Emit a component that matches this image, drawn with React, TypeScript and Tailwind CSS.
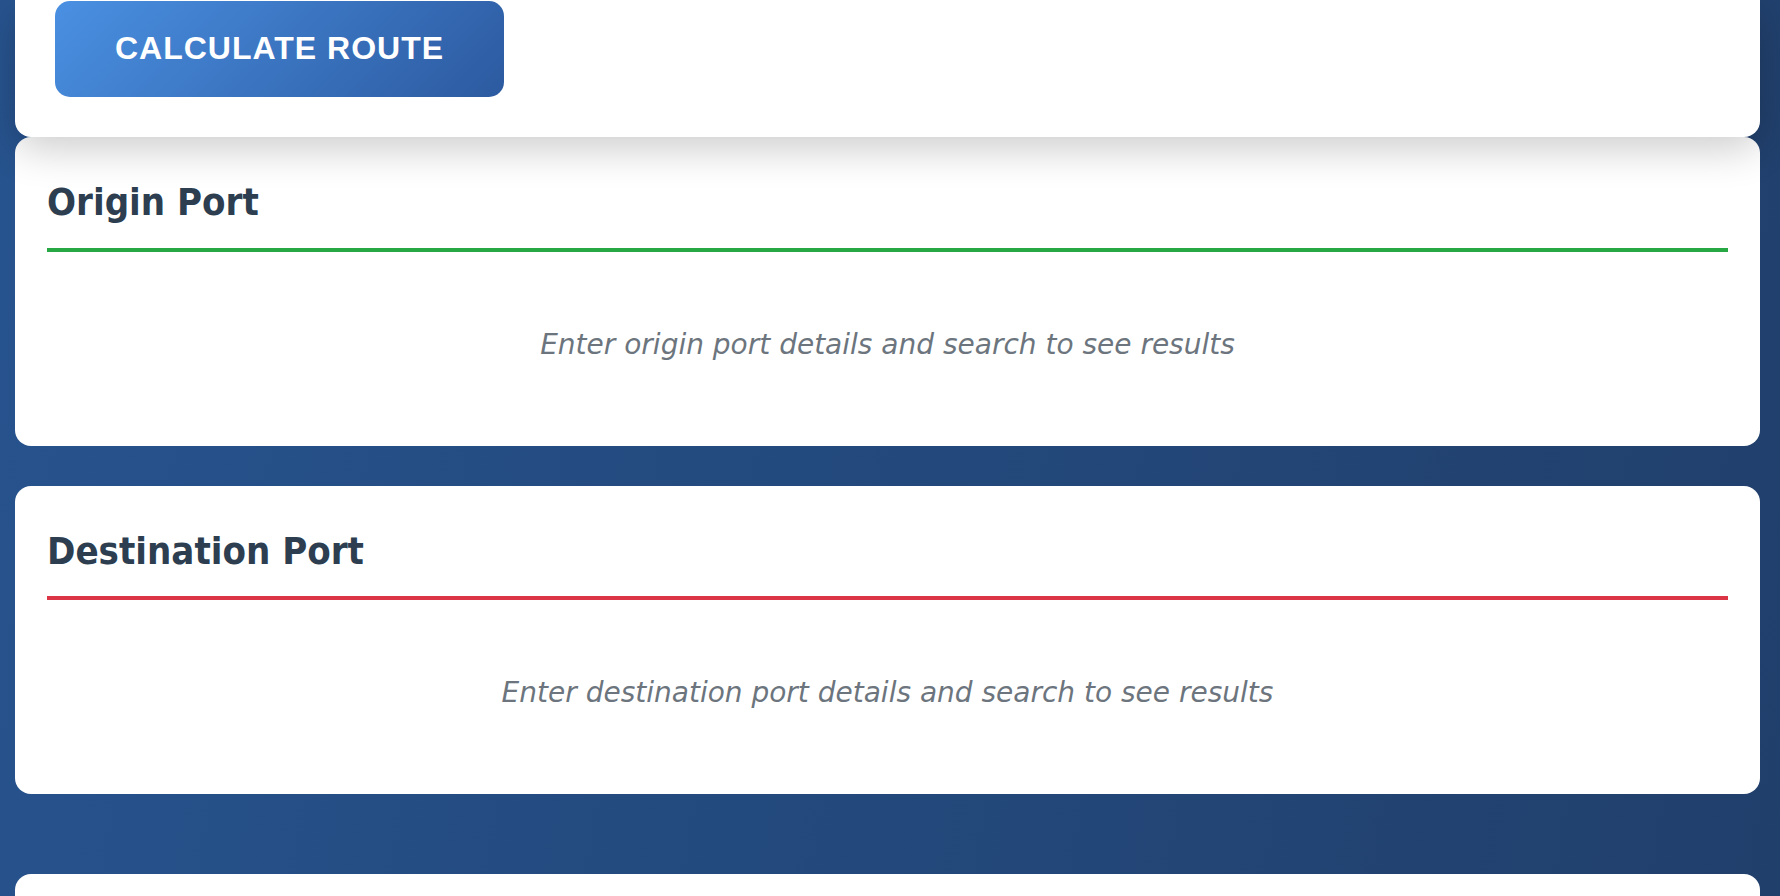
import React from "react";

const PORTS = [
  {
    id: "origin",
    title: "Origin Port",
    hint: "Enter origin port details and search to see results",
    line: "border-[#28a745]",
  },
  {
    id: "destination",
    title: "Destination Port",
    hint: "Enter destination port details and search to see results",
    line: "border-[#dc3545]",
  },
];

function PortCard({ title, hint, line }: { title: string; hint: string; line: string }) {
  return (
    <section className="bg-white rounded-[16px] px-8 pt-[43px] pb-8">
      <h2
        className={`text-[38px] leading-[1.2] font-bold text-[#2c3e50] pb-[22px] border-b-4 ${line} mb-6`}
        style={{ fontFamily: '"DejaVu Sans", sans-serif', fontStretch: "condensed" }}
      >
        {title}
      </h2>
      <p className="py-12 text-center text-[28px] leading-[42px] italic text-[#6c757d] [font-family:'DejaVu_Sans',sans-serif]">
        {hint}
      </p>
    </section>
  );
}

export default function App() {
  return (
    <div className="h-[896px] overflow-hidden bg-[linear-gradient(100deg,#27538e_0%,#234a7e_45%,#213f6b_100%)] pl-[15px] pr-[20px]">
      <div className="flex flex-col">
        {/* search form card, scrolled so only the bottom shows */}
        <div className="relative z-10 bg-white rounded-b-[16px] px-8 pt-px pb-10 shadow-[0_12px_40px_rgba(0,0,0,0.2)]">
          <button className="ml-2 w-[449px] h-[96px] pb-[2px] rounded-[15px] bg-[linear-gradient(135deg,#4a90e2,#2c5aa0)] text-white font-bold uppercase text-[32px] tracking-[1px] [font-family:'Liberation_Sans',Arial,sans-serif]">
            Calculate Route
          </button>
        </div>

        <div className="flex flex-col gap-10">
          {PORTS.map((p) => (
            <PortCard key={p.id} title={p.title} hint={p.hint} line={p.line} />
          ))}
        </div>

        <section className="mt-20 bg-white rounded-t-[16px] h-[200px]" />
      </div>
    </div>
  );
}
